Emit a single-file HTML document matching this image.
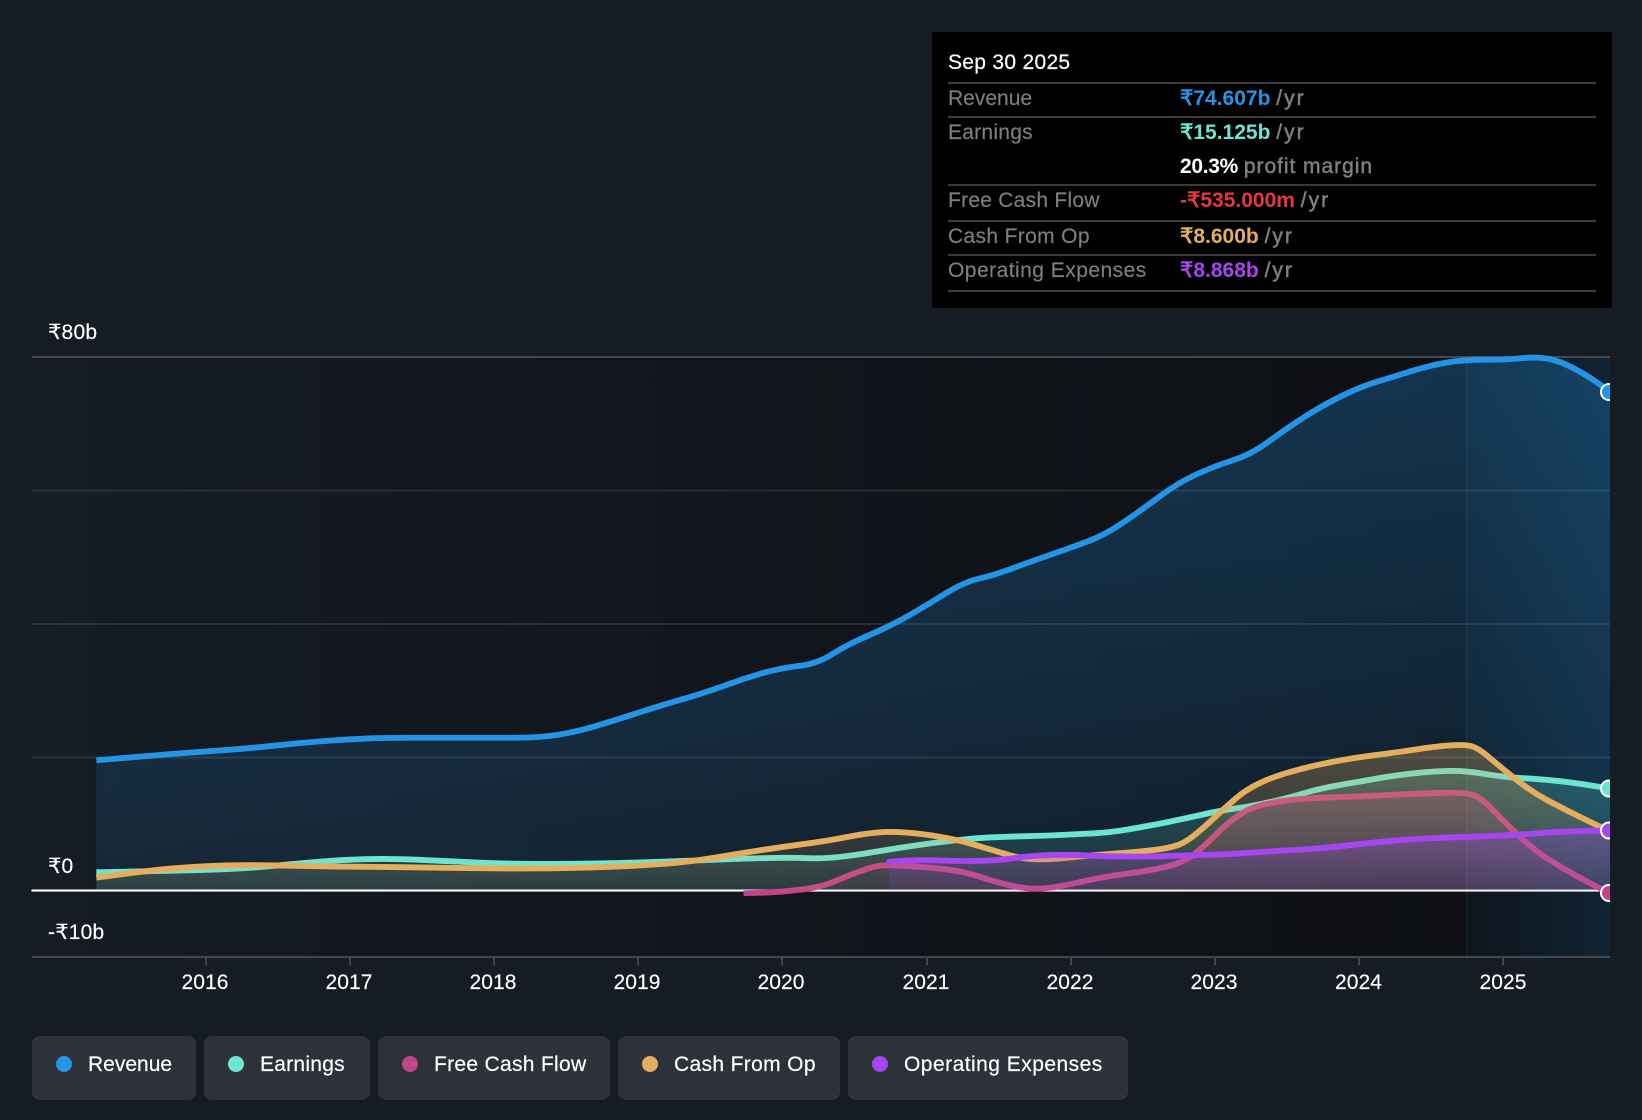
<!DOCTYPE html>
<html><head><meta charset="utf-8"><style>
*{margin:0;padding:0;box-sizing:border-box}
html,body{width:1642px;height:1120px;overflow:hidden;background:#151c24}
body{position:relative;font-family:"Liberation Sans",sans-serif;font-size:21px;color:#fff}
.a{position:absolute;white-space:nowrap;line-height:24px;letter-spacing:.2px;-webkit-text-stroke:.15px #fff}
.y{position:absolute;top:971px;width:80px;text-align:center;line-height:24px;letter-spacing:.1px;-webkit-text-stroke:.15px #fff}
.tip{position:absolute;left:932px;top:32px;width:680px;height:276px;background:#000}
.ln{position:absolute;left:948px;width:648px;height:2px;background:#3a3a3a}
.l{position:absolute;left:948px;color:#7f7f7f;line-height:24px;white-space:nowrap;letter-spacing:.3px;-webkit-text-stroke:.15px #7f7f7f}
.v{position:absolute;left:1180px;color:#7f7f7f;line-height:24px;white-space:nowrap;-webkit-text-stroke:.5px #7f7f7f}
.v b{font-weight:700;-webkit-text-stroke:0}
.v i{font-style:normal;letter-spacing:2px}
.pill{position:absolute;top:1036px;height:64px;background:#2d3139;border-radius:8px}
.dot{position:absolute;top:1056px;width:16px;height:16px;border-radius:50%}
.pt{position:absolute;top:1053px;line-height:24px;white-space:nowrap;-webkit-text-stroke:.2px #fff}
</style></head><body>
<svg width="1642" height="1120" style="position:absolute;left:0;top:0">
<defs>
<linearGradient id="bgG" x1="0" x2="1" y1="0" y2="0"><stop offset="0" stop-color="#151c24"/><stop offset=".3" stop-color="#13181f"/><stop offset="1" stop-color="#0d0f13"/></linearGradient>
<linearGradient id="hiG" x1="0" x2="1" y1="0" y2="0"><stop offset="0" stop-color="#2394e6" stop-opacity=".05"/><stop offset="1" stop-color="#2394e6" stop-opacity=".15"/></linearGradient>
<linearGradient id="gR" gradientUnits="userSpaceOnUse" x1="0" x2="0" y1="340" y2="850"><stop offset="0" stop-color="#2394e6" stop-opacity=".28"/><stop offset="1" stop-color="#2394e6" stop-opacity=".1"/></linearGradient>
<linearGradient id="gE" gradientUnits="userSpaceOnUse" x1="0" x2="0" y1="736" y2="850"><stop offset="0" stop-color="#6ce5d2" stop-opacity=".25"/><stop offset="1" stop-color="#6ce5d2" stop-opacity=".08"/></linearGradient>
<linearGradient id="gF" gradientUnits="userSpaceOnUse" x1="0" x2="0" y1="756" y2="850"><stop offset="0" stop-color="#c04a88" stop-opacity=".3"/><stop offset="1" stop-color="#c04a88" stop-opacity=".1"/></linearGradient>
<linearGradient id="gC" gradientUnits="userSpaceOnUse" x1="0" x2="0" y1="711" y2="850"><stop offset="0" stop-color="#e5ae5e" stop-opacity=".3"/><stop offset="1" stop-color="#e5ae5e" stop-opacity=".08"/></linearGradient>
<linearGradient id="gO" gradientUnits="userSpaceOnUse" x1="0" x2="0" y1="793" y2="850"><stop offset="0" stop-color="#a646ee" stop-opacity=".3"/><stop offset="1" stop-color="#a646ee" stop-opacity=".12"/></linearGradient>
<clipPath id="cp"><rect x="0" y="300" width="1610" height="700"/></clipPath>
<clipPath id="up"><rect x="0" y="0" width="1600" height="850.4"/></clipPath>
</defs>
<rect x="32" y="357" width="1434" height="600" fill="url(#bgG)"/>
<rect x="1466" y="357" width="144" height="600" fill="#0d0f13"/>
<rect x="1466" y="357" width="144" height="600" fill="url(#hiG)"/>
<rect x="32" y="356" width="1578" height="2" fill="#43474e"/>
<rect x="32" y="489.5" width="1578" height="2" fill="#fff" fill-opacity=".1"/>
<rect x="32" y="623" width="1578" height="2" fill="#fff" fill-opacity=".1"/>
<rect x="32" y="756.500" width="1578" height="2" fill="#fff" fill-opacity=".1"/>
<rect x="32" y="956" width="1578" height="2" fill="#43474e"/>
<g fill="#43474e"><rect x="205" y="957" width="2" height="8"/><rect x="349" y="957" width="2" height="8"/><rect x="493" y="957" width="2" height="8"/><rect x="637" y="957" width="2" height="8"/><rect x="781" y="957" width="2" height="8"/><rect x="926" y="957" width="2" height="8"/><rect x="1070" y="957" width="2" height="8"/><rect x="1214" y="957" width="2" height="8"/><rect x="1358" y="957" width="2" height="8"/><rect x="1502" y="957" width="2" height="8"/></g>
<g clip-path="url(#cp)">
<g transform="scale(1.04719)" stroke-linejoin="round" stroke-linecap="butt">
<path fill="url(#gR)" d="M92 726 L116 724 Q140 722 165 720 Q190 718 215 716.25 Q240 714.5 265 711.75 Q290 709 315 707.25 Q340 705.5 355 705 Q370 704.5 395 704.5 L492 704.5 Q515 704.5 532.5 701.75 Q550 699 570 693 Q590 687 610 680.5 Q630 674 652.5 667.5 Q675 661 692.5 654.5 Q710 648 727.5 643 Q745 638 762.5 636 Q780 634 795 624.5 Q810 615 830 606.5 Q850 598 867.5 588 Q885 578 902.5 567 Q920 556 935 552.5 Q950 549 967.5 542.5 Q985 536 1002.5 530 Q1020 524 1037.5 517.5 Q1055 511 1072.5 499 Q1090 487 1107.5 474 Q1125 461 1142.5 453 Q1160 445 1177.5 439.5 Q1195 434 1212.5 421 Q1230 408 1247.5 397 Q1265 386 1282.5 377.5 Q1300 369 1315 364.5 Q1330 360 1347.5 354.5 Q1365 349 1381 346.25 Q1397 343.5 1418.5 343.5 Q1440 343.5 1454 342 Q1468 340.5 1479 342.75 Q1490 345 1502.5 351.5 Q1515 358 1526.2 366 L1537.4 374 L1537.4 850.4 L92 850.4 Z"/>
<rect x="1400" y="341" width="1" height="573" fill="#fff" fill-opacity=".07"/>
<rect x="30" y="849.400" width="1508" height="2" fill="#fff"/>
<path fill="none" stroke="#2394e6" stroke-width="5.600" d="M92 726 L116 724 Q140 722 165 720 Q190 718 215 716.25 Q240 714.5 265 711.75 Q290 709 315 707.25 Q340 705.5 355 705 Q370 704.5 395 704.5 L492 704.5 Q515 704.5 532.5 701.75 Q550 699 570 693 Q590 687 610 680.5 Q630 674 652.5 667.5 Q675 661 692.5 654.5 Q710 648 727.5 643 Q745 638 762.5 636 Q780 634 795 624.5 Q810 615 830 606.5 Q850 598 867.5 588 Q885 578 902.5 567 Q920 556 935 552.5 Q950 549 967.5 542.5 Q985 536 1002.5 530 Q1020 524 1037.5 517.5 Q1055 511 1072.5 499 Q1090 487 1107.5 474 Q1125 461 1142.5 453 Q1160 445 1177.5 439.5 Q1195 434 1212.5 421 Q1230 408 1247.5 397 Q1265 386 1282.5 377.5 Q1300 369 1315 364.5 Q1330 360 1347.5 354.5 Q1365 349 1381 346.25 Q1397 343.5 1418.5 343.5 Q1440 343.5 1454 342 Q1468 340.5 1479 342.75 Q1490 345 1502.5 351.5 Q1515 358 1526.2 366 L1537.4 374"/>
<path fill="url(#gE)" d="M92 833 L116 832.5 Q140 832 165 831.5 Q190 831 215 830 Q240 829 265 826.5 Q290 824 310 822.5 Q330 821 347.5 820.5 Q365 820 382.5 820.5 Q400 821 420 822 Q440 823 465 824 Q490 825 515 825 Q540 825 570 824.5 Q600 824 630 823 Q660 822 690 820.75 Q720 819.5 740 819.25 Q760 819 772.5 819.5 Q785 820 800 818.5 Q815 817 832.5 814 Q850 811 870 808 Q890 805 910 802.75 Q930 800.5 945 799.75 Q960 799 980 798.5 Q1000 798 1015 797.25 Q1030 796.5 1045 795.75 Q1060 795 1077.5 792 Q1095 789 1112.5 785.5 Q1130 782 1147.5 778 Q1165 774 1180 772 Q1195 770 1212.5 766 Q1230 762 1245 757.5 Q1260 753 1280 749.5 Q1300 746 1317.5 743 Q1335 740 1352.5 738.25 Q1370 736.5 1385 736.25 Q1400 736 1417.5 739 Q1435 742 1452.5 743 Q1470 744 1485 745.5 Q1500 747 1518.7 750 L1537.4 753 L1537.4 850.4 L92 850.4 Z"/>
<path fill="none" stroke="#6ce5d2" stroke-width="5.600" d="M92 833 L116 832.5 Q140 832 165 831.5 Q190 831 215 830 Q240 829 265 826.5 Q290 824 310 822.5 Q330 821 347.5 820.5 Q365 820 382.5 820.5 Q400 821 420 822 Q440 823 465 824 Q490 825 515 825 Q540 825 570 824.5 Q600 824 630 823 Q660 822 690 820.75 Q720 819.5 740 819.25 Q760 819 772.5 819.5 Q785 820 800 818.5 Q815 817 832.5 814 Q850 811 870 808 Q890 805 910 802.75 Q930 800.5 945 799.75 Q960 799 980 798.5 Q1000 798 1015 797.25 Q1030 796.5 1045 795.75 Q1060 795 1077.5 792 Q1095 789 1112.5 785.5 Q1130 782 1147.5 778 Q1165 774 1180 772 Q1195 770 1212.5 766 Q1230 762 1245 757.5 Q1260 753 1280 749.5 Q1300 746 1317.5 743 Q1335 740 1352.5 738.25 Q1370 736.5 1385 736.25 Q1400 736 1417.5 739 Q1435 742 1452.5 743 Q1470 744 1485 745.5 Q1500 747 1518.7 750 L1537.4 753"/>
<path fill="url(#gF)" clip-path="url(#up)" d="M710 853 L727.5 852.5 Q745 852 765 849.5 Q785 847 797.5 841.5 Q810 836 822.5 831.5 Q835 827 842.5 826.5 Q850 826 867.5 827 Q885 828 902.5 830 Q920 832 935 837 Q950 842 962.5 845 Q975 848 985 848.5 Q995 849 1007.5 847 Q1020 845 1037.5 841 Q1055 837 1075 834.5 Q1095 832 1112.5 828 Q1130 824 1140 816 Q1150 808 1160 798 Q1170 788 1180 780.5 Q1190 773 1202.5 769.5 Q1215 766 1232.5 764 Q1250 762 1275 761.25 Q1300 760.5 1325 759.25 Q1350 758 1372.5 757.25 Q1395 756.5 1403.5 758.25 Q1412 760 1421 769 Q1430 778 1446 794 Q1462 810 1481 822 Q1500 834 1518.7 843.5 L1537.4 853 Z"/>
<path fill="none" stroke="#c04488" stroke-width="5.600" d="M710 853 L727.5 852.5 Q745 852 765 849.5 Q785 847 797.5 841.5 Q810 836 822.5 831.5 Q835 827 842.5 826.5 Q850 826 867.5 827 Q885 828 902.5 830 Q920 832 935 837 Q950 842 962.5 845 Q975 848 985 848.5 Q995 849 1007.5 847 Q1020 845 1037.5 841 Q1055 837 1075 834.5 Q1095 832 1112.5 828 Q1130 824 1140 816 Q1150 808 1160 798 Q1170 788 1180 780.5 Q1190 773 1202.5 769.5 Q1215 766 1232.5 764 Q1250 762 1275 761.25 Q1300 760.5 1325 759.25 Q1350 758 1372.5 757.25 Q1395 756.5 1403.5 758.25 Q1412 760 1421 769 Q1430 778 1446 794 Q1462 810 1481 822 Q1500 834 1518.7 843.5 L1537.4 853"/>
<path fill="url(#gC)" d="M92 838 L111 835.5 Q130 833 150 830.75 Q170 828.5 195 827.25 Q220 826 245 826.25 Q270 826.5 295 827 Q320 827.5 350 827.75 Q380 828 410 828.5 Q440 829 480 829.25 Q520 829.5 550 828.75 Q580 828 605 826.75 Q630 825.5 647.5 823.75 Q665 822 682.5 819 Q700 816 722.5 812.5 Q745 809 767.5 806 Q790 803 807.5 799.5 Q825 796 837.5 795 Q850 794 865 795 Q880 796 897.5 799 Q915 802 930 806.5 Q945 811 960 815.5 Q975 820 987.5 820.5 Q1000 821 1020 819 Q1040 817 1060 815.5 Q1080 814 1095 812.5 Q1110 811 1120 808.5 Q1130 806 1140 798 Q1150 790 1160 780.5 Q1170 771 1180 762.5 Q1190 754 1202.5 748 Q1215 742 1232.5 737 Q1250 732 1270 728 Q1290 724 1310 721.5 Q1330 719 1350 716 Q1370 713 1382.5 712 Q1395 711 1402.5 712 Q1410 713 1420 721.5 Q1430 730 1446 743 Q1462 756 1481 766 Q1500 776 1518.7 785 L1537.4 794 L1537.4 850.4 L92 850.4 Z"/>
<path fill="none" stroke="#e5ae5e" stroke-width="5.600" d="M92 838 L111 835.5 Q130 833 150 830.75 Q170 828.5 195 827.25 Q220 826 245 826.25 Q270 826.5 295 827 Q320 827.5 350 827.75 Q380 828 410 828.5 Q440 829 480 829.25 Q520 829.5 550 828.75 Q580 828 605 826.75 Q630 825.5 647.5 823.75 Q665 822 682.5 819 Q700 816 722.5 812.5 Q745 809 767.5 806 Q790 803 807.5 799.5 Q825 796 837.5 795 Q850 794 865 795 Q880 796 897.5 799 Q915 802 930 806.5 Q945 811 960 815.5 Q975 820 987.5 820.5 Q1000 821 1020 819 Q1040 817 1060 815.5 Q1080 814 1095 812.5 Q1110 811 1120 808.5 Q1130 806 1140 798 Q1150 790 1160 780.5 Q1170 771 1180 762.5 Q1190 754 1202.5 748 Q1215 742 1232.5 737 Q1250 732 1270 728 Q1290 724 1310 721.5 Q1330 719 1350 716 Q1370 713 1382.5 712 Q1395 711 1402.5 712 Q1410 713 1420 721.5 Q1430 730 1446 743 Q1462 756 1481 766 Q1500 776 1518.7 785 L1537.4 794"/>
<path fill="url(#gO)" d="M849 823 L863.5 822 Q880 821 900 821.75 Q920 822.5 937.5 822 Q955 821.5 970 819.25 Q985 817 1002.5 816.5 Q1020 816 1040 817 Q1060 818 1080 818 Q1100 818 1120 817.25 Q1140 816.5 1155 816.25 Q1170 816 1190 814.5 Q1210 813 1235 811.75 Q1260 810.5 1290 807 Q1320 803.5 1345 801.75 Q1370 800 1405 799 Q1440 798 1465 796 Q1490 794 1513.7 793.5 L1537.4 793 L1537.4 850.4 L849 850.4 Z"/>
<path fill="none" stroke="#a646ee" stroke-width="5.600" stroke-linecap="round" d="M849 823 L863.5 822 Q880 821 900 821.75 Q920 822.5 937.5 822 Q955 821.5 970 819.25 Q985 817 1002.5 816.5 Q1020 816 1040 817 Q1060 818 1080 818 Q1100 818 1120 817.25 Q1140 816.5 1155 816.25 Q1170 816 1190 814.5 Q1210 813 1235 811.75 Q1260 810.5 1290 807 Q1320 803.5 1345 801.75 Q1370 800 1405 799 Q1440 798 1465 796 Q1490 794 1513.7 793.5 L1537.4 793"/>
</g>
<g stroke="#fff" stroke-width="2">
<circle cx="1609" cy="392" r="8" fill="#2394e6"/>
<circle cx="1609" cy="788.500" r="8" fill="#6ce5d2"/>
<circle cx="1609" cy="830.500" r="8" fill="#a646ee"/>
<circle cx="1609" cy="893" r="8" fill="#c04488"/>
</g>
</g>
</svg>
<div class="a" style="left:48px;top:321px">₹80b</div>
<div class="a" style="left:48px;top:855px">₹0</div>
<div class="a" style="left:48px;top:921px">-₹10b</div>
<div class="y" style="left:165px">2016</div><div class="y" style="left:309px">2017</div><div class="y" style="left:453px">2018</div><div class="y" style="left:597px">2019</div><div class="y" style="left:741px">2020</div><div class="y" style="left:886px">2021</div><div class="y" style="left:1030px">2022</div><div class="y" style="left:1174px">2023</div><div class="y" style="left:1318.500px">2024</div><div class="y" style="left:1463px">2025</div>
<div class="tip"></div>
<div class="l" style="top:51px;color:#fff;-webkit-text-stroke:.2px #fff">Sep 30 2025</div>
<div class="ln" style="top:82px"></div>
<div class="l" style="top:87px;letter-spacing:0">Revenue</div>
<div class="v" style="top:87px"><b style="color:#2394e6">₹74.607b</b> <i>/yr</i></div>
<div class="ln" style="top:116px"></div>
<div class="l" style="top:121px;letter-spacing:.25px">Earnings</div>
<div class="v" style="top:121px"><b style="color:#6ce5d2">₹15.125b</b> <i>/yr</i></div>
<div class="v" style="top:155px"><b style="color:#fff;letter-spacing:-.3px">20.3%</b> <span style="letter-spacing:.95px">profit margin</span></div>
<div class="ln" style="top:184px"></div>
<div class="l" style="top:189px;letter-spacing:.25px">Free Cash Flow</div>
<div class="v" style="top:189px"><b style="color:#e8383f">-₹535.000m</b> <i>/yr</i></div>
<div class="ln" style="top:220px"></div>
<div class="l" style="top:225px;letter-spacing:.35px">Cash From Op</div>
<div class="v" style="top:225px"><b style="color:#e5ae5e">₹8.600b</b> <i>/yr</i></div>
<div class="ln" style="top:254px"></div>
<div class="l" style="top:259px;letter-spacing:.47px">Operating Expenses</div>
<div class="v" style="top:259px"><b style="color:#a646ee">₹8.868b</b> <i>/yr</i></div>
<div class="ln" style="top:290px"></div>
<div class="pill" style="left:32px;width:164px"></div><div class="dot" style="left:56px;background:#2394e6"></div><div class="pt" style="left:88px">Revenue</div>
<div class="pill" style="left:204px;width:166px"></div><div class="dot" style="left:228px;background:#6ce5d2"></div><div class="pt" style="left:260px;letter-spacing:.25px">Earnings</div>
<div class="pill" style="left:378px;width:232px"></div><div class="dot" style="left:402px;background:#c04488"></div><div class="pt" style="left:434px;letter-spacing:.3px">Free Cash Flow</div>
<div class="pill" style="left:618px;width:222px"></div><div class="dot" style="left:642px;background:#e5ae5e"></div><div class="pt" style="left:674px;letter-spacing:.35px">Cash From Op</div>
<div class="pill" style="left:848px;width:280px"></div><div class="dot" style="left:872px;background:#a646ee"></div><div class="pt" style="left:904px;letter-spacing:.47px">Operating Expenses</div>
</body></html>
